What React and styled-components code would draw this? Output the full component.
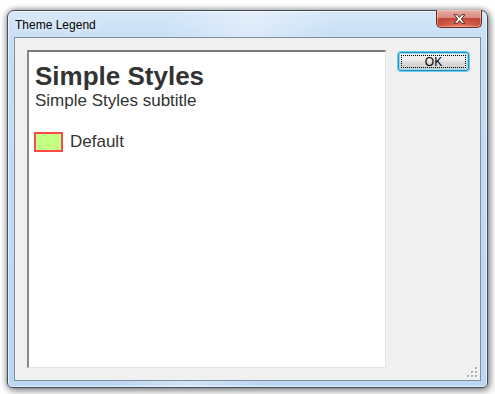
import React from 'react';
import styled, { createGlobalStyle } from 'styled-components';

const Global = createGlobalStyle`
  html, body {
    margin: 0;
    padding: 0;
    background: #ffffff;
  }
  body {
    font-family: 'Liberation Sans', Arial, sans-serif;
  }
`;

const Stage = styled.div`
  width: 495px;
  height: 394px;
  box-sizing: border-box;
  padding: 10px 7px 6px 7px;
`;

const Window = styled.div`
  position: relative;
  width: 481px;
  height: 378px;
  box-sizing: border-box;
  display: flex;
  flex-direction: column;
  padding: 0 6px 6px 6px;
  border: 1px solid #3e4c5c;
  border-radius: 7px 7px 5px 5px;
  background:
    linear-gradient(100deg, rgba(255,255,255,0) 30%, rgba(255,255,255,0.35) 45%, rgba(255,255,255,0) 60%),
    linear-gradient(to bottom, #d7e8f9 0px, #c6def6 30px, #bad6f2 100%);
  box-shadow:
    0 0 6px rgba(0, 0, 0, 0.45),
    2px 3px 8px rgba(0, 0, 0, 0.35),
    inset 0 0 0 1px rgba(255, 255, 255, 0.6);
`;

const TitleBar = styled.div`
  height: 26px;
  display: flex;
  align-items: flex-start;
`;

const Title = styled.span`
  margin: 7px 0 0 1px;
  font-size: 12px;
  color: #000;
  text-shadow: 0 0 6px rgba(255, 255, 255, 0.9);
`;

const CloseButton = styled.div`
  margin: -1px -1px 0 auto;
  width: 46px;
  height: 18px;
  box-sizing: border-box;
  display: flex;
  align-items: center;
  justify-content: center;
  border: 1px solid #6b2a22;
  border-top: none;
  border-radius: 0 0 5px 5px;
  background:
    radial-gradient(ellipse 60% 50% at 50% 100%, rgba(255, 150, 110, 0.7), rgba(255, 150, 110, 0) 100%),
    linear-gradient(to bottom, #e9ada3 0%, #d98b80 45%, #c24a3c 50%, #bf4232 100%);
  box-shadow: inset 0 0 0 1px rgba(255, 220, 210, 0.45);
`;

const Client = styled.div`
  flex: 1;
  display: flex;
  align-items: flex-start;
  gap: 12px;
  padding: 12px 11px 12px 12px;
  border: 1px solid #7f8d9c;
  background: #f0f0f0;
  position: relative;
`;

const Panel = styled.div`
  width: 359px;
  height: 318px;
  box-sizing: border-box;
  flex: none;
  padding: 9px 6px;
  background: #ffffff;
  border-style: solid;
  border-width: 2px 1px 1px 2px;
  border-color: #7a7a7a #e3e3e3 #e3e3e3 #8a8a8a;
  color: #333333;
`;

const Heading = styled.div`
  font-size: 26px;
  line-height: 30px;
  font-weight: bold;
`;

const Subtitle = styled.div`
  font-size: 17px;
  line-height: 20px;
`;

const LegendRow = styled.div`
  margin-top: 21px;
  display: flex;
  align-items: center;
  gap: 7px;
  font-size: 17px;
  line-height: 20px;
`;

const Swatch = styled.span`
  width: 29px;
  height: 20px;
  box-sizing: border-box;
  margin-left: -1px;
  background: ${p => p.fill};
  border: 2px solid ${p => p.stroke};
`;

const OkButton = styled.button`
  width: 72px;
  height: 19px;
  box-sizing: border-box;
  padding: 0;
  margin-top: 2px;
  font-family: 'Liberation Sans', Arial, sans-serif;
  font-size: 12px;
  color: #000;
  border: 1px solid #3c7fb1;
  border-radius: 3px;
  background: linear-gradient(to bottom, #f4f4f4 0%, #eaeaea 48%, #dbdbdb 52%, #cfcfcf 100%);
  box-shadow: 0 0 0 1px #5fd3f5, inset 0 0 0 1px #8be2f7;
  position: relative;
  display: flex;
  align-items: center;
  justify-content: center;

  &::after {
    content: '';
    position: absolute;
    inset: 2px;
    border: 1px dotted #000;
  }
`;

const Grip = styled.svg`
  position: absolute;
  right: 2px;
  bottom: 2px;
`;

function CloseGlyph() {
  return (
    <svg width="15" height="12" viewBox="0 0 14 11">
      <path
        d="M2 1.5 L5 1.5 L7 4 L9 1.5 L12 1.5 L8.7 5.5 L12 9.5 L9 9.5 L7 7 L5 9.5 L2 9.5 L5.3 5.5 Z"
        fill="#ffffff"
        stroke="#4a2520"
        strokeWidth="0.9"
        strokeLinejoin="round"
      />
    </svg>
  );
}

function SizeGrip() {
  const dots = [[8, 0], [8, 4], [4, 4], [8, 8], [4, 8], [0, 8]];
  return (
    <Grip width="11" height="11" viewBox="0 0 11 11">
      {dots.map(([x, y]) => (
        <g key={`${x}-${y}`}>
          <rect x={x + 1} y={y + 1} width="2" height="2" fill="#ffffff" />
          <rect x={x} y={y} width="2" height="2" fill="#a8b0b8" />
        </g>
      ))}
    </Grip>
  );
}

const legend = [
  { label: 'Default', fill: '#c3ff83', stroke: '#ff4a4a' },
];

export default function App() {
  return (
    <Stage>
      <Global />
      <Window>
        <TitleBar>
          <Title>Theme Legend</Title>
          <CloseButton><CloseGlyph /></CloseButton>
        </TitleBar>
        <Client>
          <Panel>
            <Heading>Simple Styles</Heading>
            <Subtitle>Simple Styles subtitle</Subtitle>
            {legend.map(item => (
              <LegendRow key={item.label}>
                <Swatch fill={item.fill} stroke={item.stroke} />
                <span>{item.label}</span>
              </LegendRow>
            ))}
          </Panel>
          <OkButton>OK</OkButton>
          <SizeGrip />
        </Client>
      </Window>
    </Stage>
  );
}
